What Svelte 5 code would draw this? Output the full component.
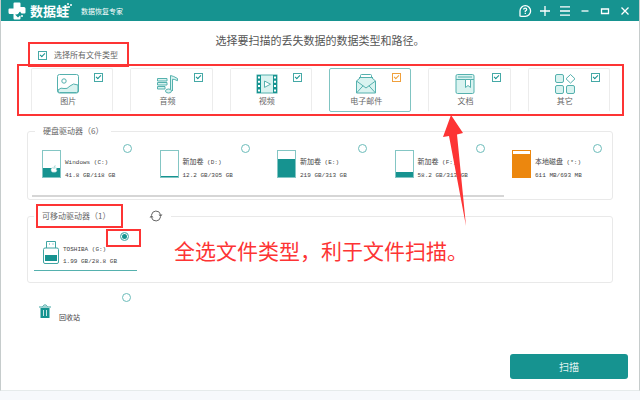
<script>
  const tabs = [
    { id: 'image', label: '图片' },
    { id: 'audio', label: '音频' },
    { id: 'video', label: '视频' },
    { id: 'mail', label: '电子邮件', active: true },
    { id: 'doc', label: '文档' },
    { id: 'other', label: '其它' },
  ];

  const drives = [
    { name: 'Windows', letter: '(C:)', usage: '41.8 GB/118 GB', fill: 36, system: true },
    { name: '新加卷', letter: '(D:)', usage: '12.2 GB/305 GB', fill: 5 },
    { name: '新加卷', letter: '(E:)', usage: '219 GB/313 GB', fill: 70 },
    { name: '新加卷', letter: '(F:)', usage: '58.2 GB/313 GB', fill: 19 },
    { name: '本地磁盘', letter: '(*:)', usage: '611 MB/693 MB', fill: 90, warn: true },
  ];

  let checked = $state({ image: true, audio: true, video: true, mail: true, doc: true, other: true });
  let target = $state('G');

  let allChecked = $derived(tabs.every((t) => checked[t.id]));

  function toggleAll(e) {
    for (const t of tabs) checked[t.id] = e.currentTarget.checked;
  }
</script>

<div class="window">
  <header>
    <svg class="logo" viewBox="0 0 18 18" width="18" height="18">
      <path d="M6.500.5h5q1 0 1 1V5H16q1.500 0 1.500 1.500v4q0 1-1 1h-3l-1.500-2-1.500 2 2 2.500v2.500q0 1-1 1h-5q-1 0-1-1V12H2q-1.500 0-1.500-1.500V7.500q0-1 1-1h4v-5q0-1 1-1z" fill="#fff" />
      <path d="M7 12.500q3.500.5 4.500-2.500l1.500 2.500-3 3z" fill="#169390" />
      <circle cx="14" cy="14" r="1" fill="#fff" />
    </svg>
    <strong class="brand">数据蛙
      <svg class="spark" viewBox="0 0 6 8" width="6" height="8" fill="#fff">
        <circle cx="2" cy="2" r="1" /><circle cx="5" cy="3" r="1" /><circle cx="3" cy="5" r="1" />
      </svg>
    </strong>
    <span class="slogan">数据恢复专家</span>
    <nav>
      <button aria-label="帮助">
        <svg viewBox="0 0 14 14" width="14" height="14">
          <path d="M2 12.6V7a5.3 5.3 0 1 1 5.3 5.3H2.4M5.7 5.6q0-1.5 1.5-1.5t1.5 1.4q0 .9-1.4 1.5v1.2M7.3 9v1" />
        </svg>
      </button>
      <button aria-label="新建">
        <svg viewBox="0 0 14 14" width="14" height="14"><path d="M7 2v10M2 7h10" /></svg>
      </button>
      <button aria-label="菜单">
        <svg viewBox="0 0 14 14" width="14" height="14"><path d="M2 2.8h10M2 7h10M2 11.2h10" /></svg>
      </button>
      <button aria-label="最小化">
        <svg viewBox="0 0 14 14" width="14" height="14"><path d="M3.5 7h7" /></svg>
      </button>
      <button aria-label="最大化">
        <svg viewBox="0 0 14 14" width="14" height="14"><path d="M3.5 5h7v4.5h-7z" /></svg>
      </button>
      <button aria-label="关闭">
        <svg viewBox="0 0 14 14" width="14" height="14"><path d="M3.5 3.5l7 7M10.5 3.5l-7 7" /></svg>
      </button>
    </nav>
  </header>

  <main>
    <h1>选择要扫描的丢失数据的数据类型和路径。</h1>

    <label class="select-all">
      <input type="checkbox" checked={allChecked} onchange={toggleAll} />
      选择所有文件类型
      <span class="mark mark-all"></span>
    </label>

    <div class="tabs">
      {#each tabs as tab (tab.id)}
        <label class="tab" class:active={tab.active}>
          <svg class="type" viewBox="0 0 22 20" width="22" height="20">
            {#if tab.id === 'image'}
              <rect x=".5" y=".5" width="21" height="18.5" rx="2" fill="#fff" />
              <path d="M1 16q3-3 6-1.5Q10 15.5 13 12t8-1v6q0 1.5-1.5 1.5h-17Q1 18.5 1 16z" />
              <circle cx="7" cy="7" r="2.2" fill="#fff" />
            {:else if tab.id === 'audio'}
              <path d="M1.5 4.5H11V7H1.5zM1.5 8.5H11V11H1.5zM1.5 12.5H9V15H1.5z" />
              <path d="M14.5 17V1.5q3 .5 7 3v2.2q-3-1.5-5-1.5V17" />
              <ellipse cx="12.5" cy="17" rx="3" ry="2" />
            {:else if tab.id === 'video'}
              <rect x="1" y="1" width="20" height="18" />
              <path d="M3 1v18M19 1v18" stroke="#169390" stroke-width="4" />
              <path d="M3 2.5v15M19 2.5v15" stroke="#fff" stroke-width="2" stroke-dasharray="2 2.3" />
              <path d="M8.5 7l6 3.2-6 3.2z" fill="#fff" />
            {:else if tab.id === 'mail'}
              <path d="M5.5 5V1.5q0-1 1-1h9q1 0 1 1V5" fill="#fff" />
              <path d="M4 3.5h14M1.5 7l4-3.5h11l4 3.5v12h-19z" />
              <path d="M1.500 7l9.500 7 9.500-7M1.500 19L8 11.800M20.500 19L14 11.800" fill="none" />
            {:else if tab.id === 'doc'}
              <rect x="2" y=".5" width="18" height="19" rx="1.5" />
              <path d="M2 5.5h18" />
              <path d="M11.5 5.5h5v8L14 11.5l-2.5 2z" fill="#fff" />
              <path d="M4 3h14" fill="none" />
            {:else}
              <rect x="1.5" y=".5" width="8" height="8" rx="1.5" />
              <rect x="1.5" y="11.5" width="8" height="8" rx="1.5" />
              <rect x="12.5" y="11.5" width="8" height="8" rx="1.5" />
              <path d="M16.5.5l4.500 4.300-4.500 4.300L12 4.800z" fill="#fff" />
            {/if}
          </svg>
          {tab.label}
          <input type="checkbox" bind:checked={checked[tab.id]} />
        </label>
      {/each}
      <span class="mark mark-tabs"></span>
    </div>

    <fieldset class="fixed">
      <legend>硬盘驱动器（6）</legend>
      <div class="drives">
        {#each drives as drive}
          <label class="drive">
            <span class="disk" class:warn={drive.warn}>
              <span class="fill" style="height: {drive.fill}%;"></span>
              {#if drive.system}
                <svg class="system" viewBox="0 0 8 8" width="8" height="8">
                  <path d="M1.500 3.200q1.300-.9 2.500 0 1.300-.9 2.700 0-1 1.300.3 2.500Q6 7.800 4 7.200 2 7.800 1.200 6q-.6-1.800.3-2.800zM4 2.500Q4 1 5.300.5 5.300 2 4 2.500z" fill="#fff" stroke="#84c6c4" stroke-width=".5" />
                </svg>
              {/if}
            </span>
            <span class="info">
              <span><span class:name={!drive.system}>{drive.name}</span> {drive.letter}</span>
              <span>{drive.usage}</span>
            </span>
            <input type="radio" name="target" value={drive.letter} bind:group={target} />
          </label>
        {/each}
      </div>
      <div class="scroll"></div>
    </fieldset>

    <fieldset class="removable">
      <legend>
        可移动驱动器（1）
        <span class="mark mark-legend"></span>
        <button class="refresh" aria-label="刷新">
          <svg viewBox="0 0 14 12" width="14" height="12" fill="none" stroke="#666">
            <path d="M2.5 5a4.600 4.600 0 0 1 9-.5M11.500 7a4.600 4.600 0 0 1-9 .5" />
            <path d="M9.500 4.500h4L11.500 7zM.5 7.500h4L2.500 5z" fill="#666" stroke="none" />
          </svg>
        </button>
      </legend>
      <label class="drive usb">
        <svg class="stick" viewBox="0 0 16 23" width="16" height="23" fill="none" stroke="#3fa5a3">
          <path d="M3.500 7V.5h9V7M6 3h1M9.500 3h1" />
          <rect x=".5" y="7" width="15" height="15.500" rx="1.500" />
          <rect x="2" y="14" width="12" height="6" fill="#169390" stroke="none" />
        </svg>
        <span class="info">
          <span>TOSHIBA (G:)</span>
          <span>1.99 GB/28.8 GB</span>
        </span>
        <input type="radio" name="target" value="G" bind:group={target} />
        <span class="mark mark-radio"></span>
      </label>
    </fieldset>

    <label class="drive recycle">
      <svg viewBox="0 0 12 14" width="12" height="14">
        <path d="M1.500 4h9v10h-9z" fill="#169390" />
        <path d="M0 3h12M3.500 2.500Q6-.8 8.500 2.500" fill="none" stroke="#3fa5a3" />
        <path d="M4.500 6v6M7.500 6v6" stroke="#c5e6e5" />
      </svg>
      <span class="name">回收站</span>
      <input type="radio" name="target" value="recycle" bind:group={target} />
    </label>

    <button class="scan">扫描</button>
  </main>

  <svg class="arrow" viewBox="0 0 24 112" width="24" height="112">
    <path d="M9 0l12 18-6 1.500L24 111 7 21l-6 1z" fill="#fd3434" />
  </svg>
  <p class="note">全选文件类型，利于文件扫描。</p>
</div>

<style>
  :global(body) {
    margin: 0;
    background: #f7f9fc;
  }

  .window {
    position: relative;
    box-sizing: border-box;
    border: 1px solid #c6cccc;
    border-top: 0;
    border-bottom-color: #e6ebeb;
    background: #fff;
    color: #666;
    font-family: 'Noto Sans CJK SC', sans-serif;
    font-size: 8px;
    line-height: 12px;
  }

  button {
    padding: 0;
    border: 0;
    background: none;
    font-family: inherit;
  }

  header {
    display: flex;
    align-items: center;
    height: 21px;
    padding: 0 7px;
    background: #169390;
    color: #fff;
  }

  .logo {
    margin-right: 4px;
  }

  .brand {
    position: relative;
    font-size: 13px;
    line-height: 20px;
  }

  .spark {
    position: absolute;
    top: 1px;
    right: -3px;
  }

  .slogan {
    margin-left: 12px;
    font-size: 7px;
  }

  nav {
    display: flex;
    gap: 6px;
    margin-left: auto;
  }

  nav button {
    height: 14px;
  }

  nav svg {
    display: block;
    fill: none;
    stroke: #fff;
    stroke-width: 1.3;
  }

  main {
    display: flex;
    flex-direction: column;
    padding: 12px 26px 11px;
  }

  h1 {
    margin: 0;
    color: #555;
    font-size: 11px;
    font-weight: 400;
    line-height: 14px;
    text-align: center;
  }

  input {
    appearance: none;
    box-sizing: border-box;
    flex: none;
    width: 9px;
    height: 9px;
    margin: 0;
    border: 1px solid #45a9a6;
    background: #fff;
  }

  input[type='checkbox']:checked::after {
    content: '';
    display: block;
    width: 4px;
    height: 2px;
    margin: 1px;
    border: solid #169390;
    border-width: 0 0 1px 1px;
    transform: rotate(-45deg);
  }

  input[type='radio'] {
    border-color: #6cbcba;
    border-radius: 50%;
  }

  input[type='radio']:checked {
    background: #169390;
    box-shadow: inset 0 0 0 1px #fff;
  }

  .select-all {
    position: relative;
    display: flex;
    align-items: center;
    align-self: flex-start;
    gap: 7px;
    margin: 2px 0 7px 11px;
  }

  .tabs {
    position: relative;
    display: flex;
    gap: 17px;
    margin: 0 3px 13px 4px;
  }

  .tab {
    position: relative;
    display: flex;
    flex: 1;
    flex-direction: column;
    align-items: center;
    gap: 1px;
    padding: 5px 8px 4px 0;
    border: 1px solid #ececec;
    border-bottom-color: #fff;
    border-radius: 2px;
  }

  .tab.active {
    border-color: #80c4c2;
  }

  .type {
    fill: #d9f3f0;
    stroke: #55b1ae;
  }

  .tab input {
    position: absolute;
    top: 4px;
    right: 9px;
  }

  .tab.active input,
  .tab.active input::after {
    border-color: #f0a03c;
  }

  fieldset {
    min-width: 0;
    margin: 0 0 10px;
    padding: 7px 4px 2px;
    border: 1px solid #e9e9e9;
    border-radius: 3px;
  }

  legend {
    position: relative;
    display: flex;
    align-items: center;
    margin-left: 3px;
    padding: 0 8px;
  }

  .drives {
    display: flex;
    justify-content: space-between;
    padding: 0 6px 0 10px;
  }

  .drive {
    position: relative;
    box-sizing: border-box;
    display: flex;
    gap: 4px;
    width: 90px;
    padding-top: 6px;
    color: #444;
    font-family: 'Liberation Mono', 'Noto Sans CJK SC', monospace;
    font-size: 6px;
    line-height: 13px;
    white-space: nowrap;
  }

  .drive input {
    position: absolute;
    top: 0;
    right: 0;
  }

  .disk {
    position: relative;
    box-sizing: border-box;
    display: flex;
    align-items: flex-end;
    width: 19px;
    height: 28px;
    border: 1px solid #84c6c4;
  }

  .fill {
    flex: 1;
    background: #169390;
  }

  .warn {
    border-color: #ec870e;
  }

  .warn .fill {
    background: #ec870e;
  }

  .system {
    position: absolute;
    right: 2px;
    bottom: 4px;
  }

  .info {
    display: flex;
    flex-direction: column;
    padding-top: 6px;
  }

  .info > span {
    height: 13px;
  }

  .name {
    font-size: 7px;
  }

  .scroll {
    width: 82%;
    height: 2px;
    margin-top: 13px;
    background: #d6d6d6;
  }

  .removable {
    margin-bottom: 10px;
    padding: 10px 2px 11px;
  }

  .removable legend {
    margin-left: 4px;
    gap: 39px;
  }

  .refresh {
    height: 12px;
  }

  .refresh svg {
    display: block;
  }

  .usb {
    width: 103px;
    margin-left: 4px;
    padding: 9px 0 2px 9px;
    border-bottom: 1px solid #55b1ae;
    line-height: 12px;
  }

  .usb .info {
    padding-top: 3px;
  }

  .usb .info > span {
    height: 12px;
  }

  .usb input {
    right: 8px;
  }

  .recycle {
    width: 92px;
    margin: 0 0 30px 12px;
    padding-top: 11px;
    gap: 8px;
    line-height: 12px;
  }

  .recycle .name {
    padding-top: 8px;
  }

  .scan {
    align-self: flex-end;
    width: 118px;
    margin-right: -15px;
    border-radius: 3px;
    background: #169390;
    color: #e0f2f1;
    font-size: 10px;
    line-height: 25px;
  }

  /* red call-outs drawn over the window */
  .mark {
    position: absolute;
    border: 2px solid #fd3434;
    pointer-events: none;
  }

  .mark-all {
    inset: -7px -11px -6px -10px;
  }

  .mark-tabs {
    inset: -4px -14px -4px -14px;
  }

  .mark-legend {
    top: -6px;
    bottom: -6px;
    left: 2px;
    width: 83px;
  }

  .mark-radio {
    top: -3px;
    right: -4px;
    width: 31px;
    height: 14px;
  }

  .arrow {
    position: absolute;
    top: 115px;
    left: 441px;
  }

  .note {
    position: absolute;
    top: 235px;
    left: 173px;
    margin: 0;
    color: #fd3434;
    font-size: 21px;
    line-height: 30px;
    white-space: nowrap;
  }
</style>
